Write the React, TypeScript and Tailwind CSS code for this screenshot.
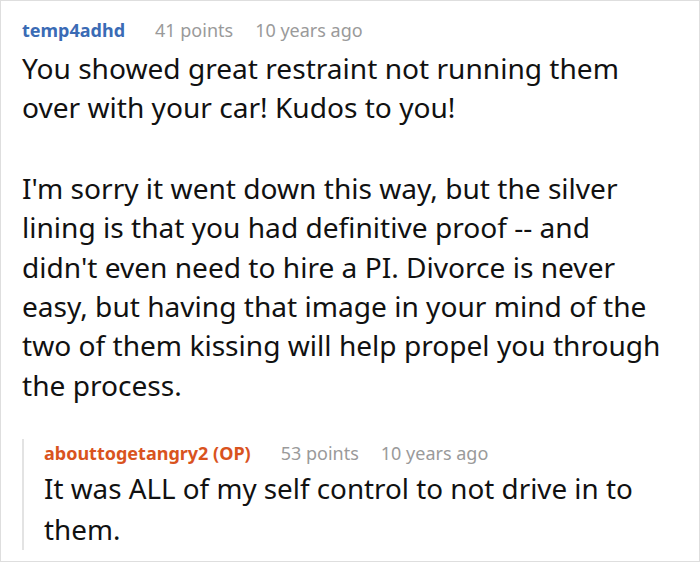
export default function App() {
  return (
    <div
      className="h-[562px] w-[700px] overflow-hidden border border-[#dedede] bg-white pl-[21px] pr-[36px] pt-[15px]"
      style={{ fontFamily: '"Noto Sans", sans-serif' }}
    >
      <div className="flex items-baseline text-[18px] leading-[28px]">
        <span className="font-bold text-[#3a6bb5]">temp4adhd</span>
        <span className="ml-[30px] text-[#9a9a9a]">41 points</span>
        <span className="ml-[22px] text-[#9a9a9a]">10 years ago</span>
      </div>
      <div className="mt-[5px] text-[28.1px] leading-[39.4px] text-[#111]">
        <p>You showed great restraint not running them over with your car! Kudos to you!</p>
        <p className="mt-[41px]">
          I'm sorry it went down this way, but the silver lining is that you had definitive proof -- and
          didn't even need to hire a PI. Divorce is never easy, but having that image in your mind of the
          two of them kissing will help propel you through the process.
        </p>
      </div>
      <div className="mt-[34px] border-l-2 border-[#e3e3e3] pl-[20px]">
        <div className="flex items-baseline text-[18px] leading-[28px]">
          <span className="font-bold text-[#d9531e]">abouttogetangry2 (OP)</span>
          <span className="ml-[30px] text-[#9a9a9a]">53 points</span>
          <span className="ml-[22px] text-[#9a9a9a]">10 years ago</span>
        </div>
        <p className="mt-[1px] text-[27.8px] leading-[41px] text-[#111]">
          It was ALL of my self control to not drive in to them.
        </p>
      </div>
    </div>
  );
}
